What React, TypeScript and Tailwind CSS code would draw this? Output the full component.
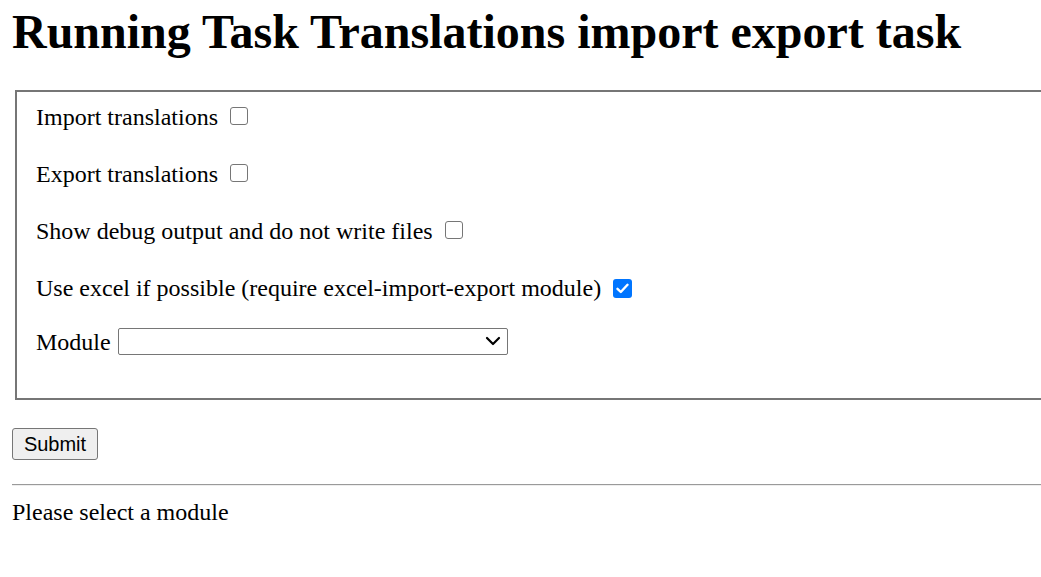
import React from "react";

const Box: React.FC<{ checked?: boolean }> = ({ checked }) =>
  checked ? (
    <span className="ml-[12px] inline-flex h-[19px] w-[19px] shrink-0 items-center justify-center rounded-[3px] bg-[#0075ff]">
      <svg width="13" height="11" viewBox="0 0 13 11" fill="none">
        <path d="M1.5 5.8 L4.8 9 L11.5 1.8" stroke="#fff" strokeWidth="2.4" strokeLinecap="round" strokeLinejoin="round" />
      </svg>
    </span>
  ) : (
    <span className="ml-[12px] -mt-[2px] inline-block h-[18px] w-[18px] shrink-0 rounded-[3px] border border-[#767676] bg-white" />
  );

const Row: React.FC<{ label: string; checked?: boolean }> = ({ label, checked }) => (
  <div className="flex h-[28px] items-center">
    <span className="leading-[28px]">{label}</span>
    <Box checked={checked} />
  </div>
);

export default function App() {
  return (
    <div className="overflow-hidden bg-white pl-[12px] text-black font-['Liberation_Serif',serif] text-[24px]">
      <h1 className="pt-[8px] text-[48px] font-bold leading-[48px] whitespace-nowrap">
        Running Task Translations import export task
      </h1>

      <div className="mt-[34px] ml-[3px] w-[1100px] border-2 border-[#767676] pt-[11px] pb-[42px] pl-[19px]">
        <div className="flex flex-col gap-[29px]">
          <Row label="Import translations" />
          <Row label="Export translations" />
          <Row label="Show debug output and do not write files" />
          <Row label="Use excel if possible (require excel-import-export module)" checked />
          <div className="-mt-[3px] flex h-[28px] items-center">
            <span className="leading-[28px]">Module</span>
            <div className="ml-[7px] -mt-[2px] flex h-[27px] w-[390px] items-center justify-end rounded-[2px] border border-[#767676] bg-white pr-[6px]">
              <svg width="16" height="10" viewBox="0 0 16 10" fill="none">
                <path d="M2 2 L8 8 L14 2" stroke="#000" strokeWidth="2.2" strokeLinecap="round" strokeLinejoin="round" />
              </svg>
            </div>
          </div>
        </div>
      </div>

      <div className="mt-[28px] flex">
        <button className="h-[32px] w-[86px] rounded-[3px] border border-[#767676] bg-[#efefef] font-['Liberation_Sans',sans-serif] text-[20px] leading-none">
          Submit
        </button>
      </div>

      <div className="mt-[24px] h-[2px] border-t border-[#9a9a9a] border-b-[#eeeeee] border-b" />

      <p className="mt-[12px] leading-[28px]">Please select a module</p>
    </div>
  );
}
